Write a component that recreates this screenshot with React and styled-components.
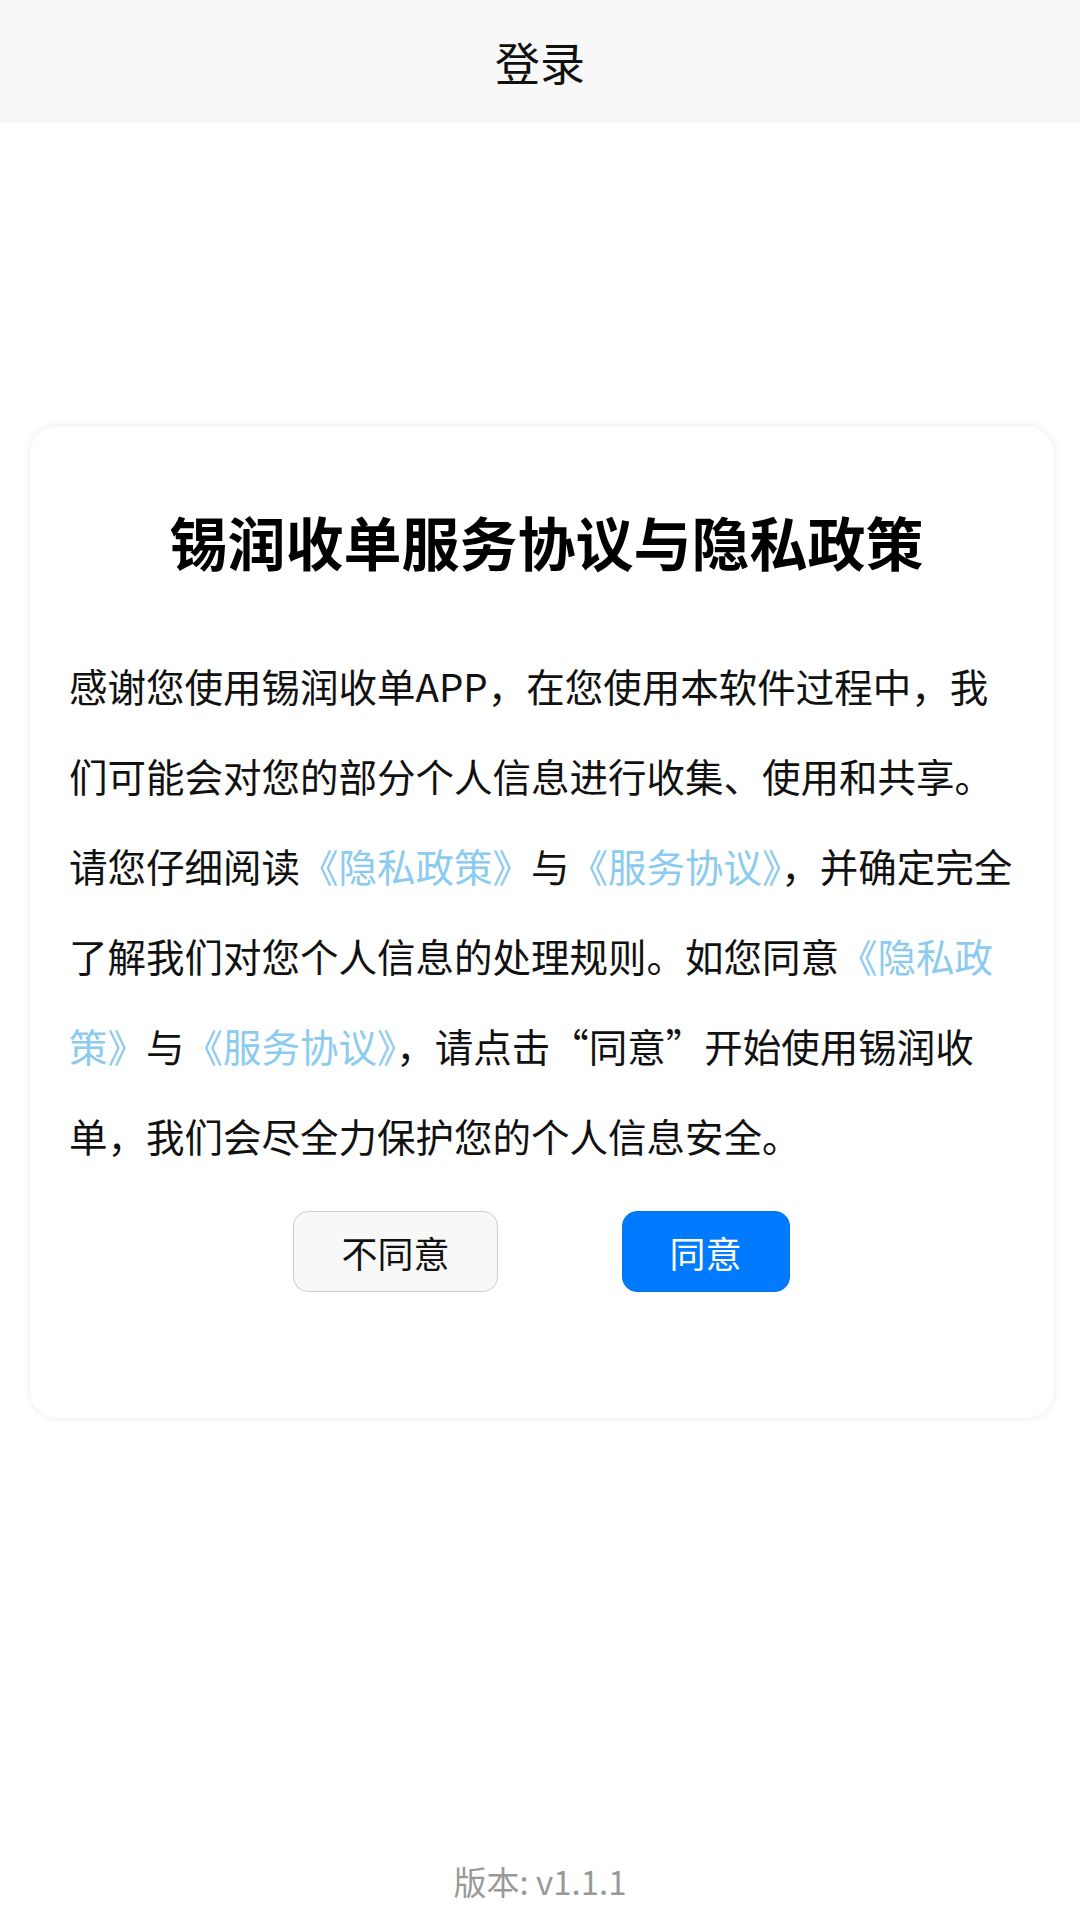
import React from "react";
import styled, { createGlobalStyle } from "styled-components";

const GlobalStyle = createGlobalStyle`
  html, body {
    margin: 0;
    padding: 0;
    background: #ffffff;
  }
  body {
    font-family: "Noto Sans CJK SC", "Noto Sans", sans-serif;
    color: #111;
  }
  * { box-sizing: border-box; }
`;

const Page = styled.div`
  min-height: 100vh;
  display: flex;
  flex-direction: column;
  background: #fff;
`;

const Header = styled.header`
  height: 123px;
  flex-shrink: 0;
  background: #f8f8f8;
  display: flex;
  align-items: center;
  justify-content: center;
  font-size: 45px;
  color: #111;
`;

const Main = styled.main`
  padding: 303px 26px 0 30px;
`;

const Card = styled.section`
  background: #fff;
  border-radius: 28px;
  box-shadow: 0 0 10px rgba(0, 0, 0, 0.09);
  padding: 72px 30px 126px 39px;
`;

const Title = styled.h1`
  margin: 0 0 55px;
  text-align: center;
  font-size: 58px;
  font-weight: 700;
  line-height: 87px;
  color: #000;
`;

const Body = styled.p`
  margin: 0;
  font-size: 38.5px;
  line-height: 90px;
  color: #111;
`;

const Link = styled.span`
  color: #8ccbf0;
`;

const Actions = styled.div`
  display: flex;
  justify-content: center;
  gap: 124px;
  margin-top: 31px;
  padding-right: 10px;
`;

const Button = styled.button`
  height: 81px;
  padding: 0 47px;
  border-radius: 15px;
  font-family: inherit;
  font-size: 36px;
  line-height: 1;
  cursor: pointer;
  border: 1px solid ${(p) => (p.$primary ? "#0a6fe0" : "#cccccc")};
  background: ${(p) => (p.$primary ? "#007aff" : "#f8f8f8")};
  color: ${(p) => (p.$primary ? "#ffffff" : "#111111")};
`;

const Footer = styled.footer`
  margin-top: auto;
  text-align: center;
  font-size: 33px;
  line-height: 50px;
  color: #999;
  padding-bottom: 12px;
`;

export default function App() {
  return (
    <>
      <GlobalStyle />
      <Page>
        <Header>登录</Header>
        <Main>
          <Card>
            <Title>锡润收单服务协议与隐私政策</Title>
            <Body>
              感谢您使用锡润收单APP，在您使用本软件过程中，我们可能会对您的部分个人信息进行收集、使用和共享。请您仔细阅读
              <Link>《隐私政策》</Link>与<Link>《服务协议》</Link>
              ，并确定完全了解我们对您个人信息的处理规则。如您同意
              <Link>《隐私政策》</Link>与<Link>《服务协议》</Link>
              ，请点击“同意”开始使用锡润收单，我们会尽全力保护您的个人信息安全。
            </Body>
            <Actions>
              <Button type="button">不同意</Button>
              <Button type="button" $primary>
                同意
              </Button>
            </Actions>
          </Card>
        </Main>
        <Footer>版本: v1.1.1</Footer>
      </Page>
    </>
  );
}
